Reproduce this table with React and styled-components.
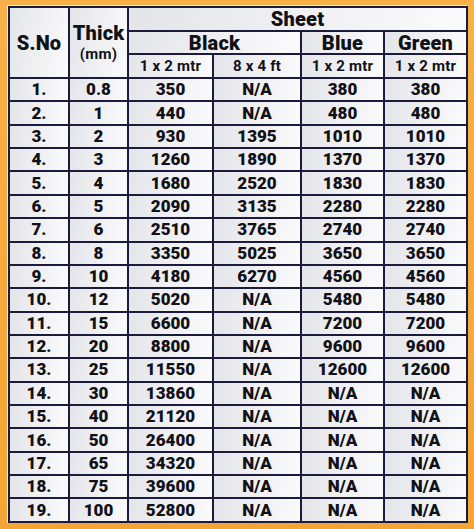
import React from "react";
import styled, { createGlobalStyle } from "styled-components";

const GlobalStyle = createGlobalStyle`
  html, body {
    margin: 0;
    padding: 0;
    background: #f6a93b;
  }
`;

const Frame = styled.div`
  width: 474px;
  height: 529px;
  box-sizing: border-box;
  padding: 5px 7px 6px 7px;
  background: linear-gradient(180deg, #f8b048 0%, #f5a535 100%);
`;

const Inner = styled.div`
  height: 100%;
  box-sizing: border-box;
  padding: 1px;
  background: #fdf1dc;
`;

const Table = styled.table`
  width: 458px;
  table-layout: fixed;
  border-collapse: collapse;
  border: 2px solid #1b1b3d;
  font-family: Roboto, "Liberation Sans", sans-serif;
  color: #111118;
  background: linear-gradient(180deg, #f6f6f8 0%, #e9eaee 100%);
`;

const Cell = styled.td`
  border: 2px solid #1b1b3d;
  padding: 0;
  text-align: center;
  vertical-align: middle;
  font-weight: 900;
  font-size: ${(p) => p.$size || 17}px;
  line-height: 1;
  background: linear-gradient(100deg, #e4e5e9 0%, #f1f1f4 55%, #fbfbfc 100%);
`;

const HeadCell = styled(Cell).attrs({ as: "th" })`
  font-size: ${(p) => p.$size || 20}px;
  font-weight: ${(p) => (p.$size ? 700 : 900)};
  letter-spacing: 0.2px;
`;

const Sub = styled.span`
  display: block;
  font-size: 15px;
  line-height: 1.1;
  font-weight: 700;
  margin-top: 3px;
`;

const Row = styled.tr`
  height: ${(p) => p.$h}px;
`;

const data = [
  ["0.8", "350", "N/A", "380", "380"],
  ["1", "440", "N/A", "480", "480"],
  ["2", "930", "1395", "1010", "1010"],
  ["3", "1260", "1890", "1370", "1370"],
  ["4", "1680", "2520", "1830", "1830"],
  ["5", "2090", "3135", "2280", "2280"],
  ["6", "2510", "3765", "2740", "2740"],
  ["8", "3350", "5025", "3650", "3650"],
  ["10", "4180", "6270", "4560", "4560"],
  ["12", "5020", "N/A", "5480", "5480"],
  ["15", "6600", "N/A", "7200", "7200"],
  ["20", "8800", "N/A", "9600", "9600"],
  ["25", "11550", "N/A", "12600", "12600"],
  ["30", "13860", "N/A", "N/A", "N/A"],
  ["40", "21120", "N/A", "N/A", "N/A"],
  ["50", "26400", "N/A", "N/A", "N/A"],
  ["65", "34320", "N/A", "N/A", "N/A"],
  ["75", "39600", "N/A", "N/A", "N/A"],
  ["100", "52800", "N/A", "N/A", "N/A"],
];

export default function App() {
  return (
    <>
      <GlobalStyle />
      <Frame>
        <Inner>
          <Table>
            <colgroup>
              <col style={{ width: 60 }} />
              <col style={{ width: 59 }} />
              <col style={{ width: 85 }} />
              <col style={{ width: 88 }} />
              <col style={{ width: 83 }} />
              <col style={{ width: 83 }} />
            </colgroup>
            <thead>
              <Row $h={24}>
                <HeadCell rowSpan={3}>S.No</HeadCell>
                <HeadCell rowSpan={3}>
                  Thick
                  <Sub>(mm)</Sub>
                </HeadCell>
                <HeadCell colSpan={4}>Sheet</HeadCell>
              </Row>
              <Row $h={23}>
                <HeadCell colSpan={2}>Black</HeadCell>
                <HeadCell>Blue</HeadCell>
                <HeadCell>Green</HeadCell>
              </Row>
              <Row $h={24}>
                <HeadCell $size={15}>1 x 2 mtr</HeadCell>
                <HeadCell $size={15}>8 x 4 ft</HeadCell>
                <HeadCell $size={15}>1 x 2 mtr</HeadCell>
                <HeadCell $size={15}>1 x 2 mtr</HeadCell>
              </Row>
            </thead>
            <tbody>
              {data.map((r, i) => (
                <Row key={i} $h={23.37}>
                  <Cell>{i + 1}.</Cell>
                  {r.map((v, j) => (
                    <Cell key={j}>{v}</Cell>
                  ))}
                </Row>
              ))}
            </tbody>
          </Table>
        </Inner>
      </Frame>
    </>
  );
}
